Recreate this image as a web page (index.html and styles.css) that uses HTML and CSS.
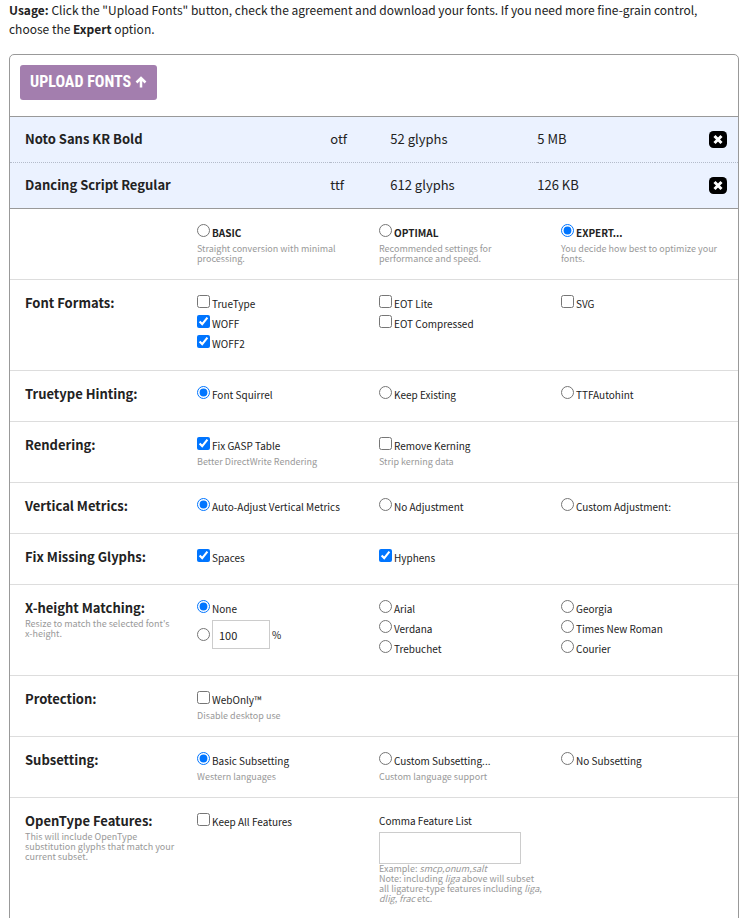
FILE: index.html
```
<!DOCTYPE html>
<html lang="en">
<head>
<meta charset="UTF-8" />
<meta name="viewport" content="width=device-width, initial-scale=1" />
<title>Webfont Generator</title>
<link rel="stylesheet" href="styles.css">
</head>
<body>

<p class="usage"><strong>Usage:</strong> Click the "Upload Fonts" button, check the agreement and download your fonts. If you need more fine-grain control, choose the <strong>Expert</strong> option.</p>

<form class="generator">
  <div class="upload">
    <button type="button" class="upload-btn">UPLOAD FONTS
      <svg class="arrow" width="12" height="12" viewBox="0 0 12 12"><path d="M6 11.5V2M1.5 6.5L6 2l4.5 4.5" fill="none" stroke="#fff" stroke-width="2.5"/></svg>
    </button>
  </div>

  <table class="files">
    <tr>
      <th scope="row" class="name">Noto Sans KR Bold</th>
      <td class="type">otf</td>
      <td class="glyphs">52 glyphs</td>
      <td>5 MB</td>
      <td class="remove"><button type="button" class="remove-btn" aria-label="Remove Noto Sans KR Bold"><svg width="18" height="17" viewBox="0 0 18 17"><rect width="18" height="17" rx="4.5"/><path d="M5.5 5l7 7M12.5 5l-7 7" stroke="#fff" stroke-width="3"/></svg></button></td>
    </tr>
    <tr>
      <th scope="row" class="name">Dancing Script Regular</th>
      <td class="type">ttf</td>
      <td class="glyphs">612 glyphs</td>
      <td>126 KB</td>
      <td class="remove"><button type="button" class="remove-btn" aria-label="Remove Dancing Script Regular"><svg width="18" height="17" viewBox="0 0 18 17"><rect width="18" height="17" rx="4.5"/><path d="M5.5 5l7 7M12.5 5l-7 7" stroke="#fff" stroke-width="3"/></svg></button></td>
    </tr>
  </table>

  <div class="row">
    <div class="title"></div>
    <div class="col">
      <label class="option mode"><input type="radio" name="mode">BASIC</label>
      <p class="hint">Straight conversion with minimal processing.</p>
    </div>
    <div class="col">
      <label class="option mode"><input type="radio" name="mode">OPTIMAL</label>
      <p class="hint">Recommended settings for performance and speed.</p>
    </div>
    <div class="col">
      <label class="option mode"><input type="radio" name="mode" checked>EXPERT...</label>
      <p class="hint">You decide how best to optimize your fonts.</p>
    </div>
  </div>

  <div class="row">
    <div class="title"><h4>Font Formats:</h4></div>
    <div class="col">
      <label class="option"><input type="checkbox">TrueType</label>
      <label class="option"><input type="checkbox" checked>WOFF</label>
      <label class="option"><input type="checkbox" checked>WOFF2</label>
    </div>
    <div class="col">
      <label class="option"><input type="checkbox">EOT Lite</label>
      <label class="option"><input type="checkbox">EOT Compressed</label>
    </div>
    <div class="col">
      <label class="option"><input type="checkbox">SVG</label>
    </div>
  </div>

  <div class="row">
    <div class="title"><h4>Truetype Hinting:</h4></div>
    <div class="col"><label class="option"><input type="radio" name="hinting" checked>Font Squirrel</label></div>
    <div class="col"><label class="option"><input type="radio" name="hinting">Keep Existing</label></div>
    <div class="col"><label class="option"><input type="radio" name="hinting">TTFAutohint</label></div>
  </div>

  <div class="row">
    <div class="title"><h4>Rendering:</h4></div>
    <div class="col">
      <label class="option"><input type="checkbox" checked>Fix GASP Table</label>
      <p class="hint">Better DirectWrite Rendering</p>
    </div>
    <div class="col">
      <label class="option"><input type="checkbox">Remove Kerning</label>
      <p class="hint">Strip kerning data</p>
    </div>
  </div>

  <div class="row">
    <div class="title"><h4>Vertical Metrics:</h4></div>
    <div class="col"><label class="option"><input type="radio" name="metrics" checked>Auto-Adjust Vertical Metrics</label></div>
    <div class="col"><label class="option"><input type="radio" name="metrics">No Adjustment</label></div>
    <div class="col"><label class="option"><input type="radio" name="metrics">Custom Adjustment:</label></div>
  </div>

  <div class="row">
    <div class="title"><h4>Fix Missing Glyphs:</h4></div>
    <div class="col"><label class="option"><input type="checkbox" checked>Spaces</label></div>
    <div class="col"><label class="option"><input type="checkbox" checked>Hyphens</label></div>
  </div>

  <div class="row">
    <div class="title">
      <h4>X-height Matching:</h4>
      <p class="hint">Resize to match the selected font's <span class="nowrap">x-height.</span></p>
    </div>
    <div class="col">
      <label class="option"><input type="radio" name="xheight" checked>None</label>
      <div class="option percent">
        <input type="radio" name="xheight" aria-label="Custom percentage">
        <input type="text" class="text" id="percent" value="100">
        <label for="percent">%</label>
      </div>
    </div>
    <div class="col">
      <label class="option"><input type="radio" name="xheight">Arial</label>
      <label class="option"><input type="radio" name="xheight">Verdana</label>
      <label class="option"><input type="radio" name="xheight">Trebuchet</label>
    </div>
    <div class="col">
      <label class="option"><input type="radio" name="xheight">Georgia</label>
      <label class="option"><input type="radio" name="xheight">Times New Roman</label>
      <label class="option"><input type="radio" name="xheight">Courier</label>
    </div>
  </div>

  <div class="row">
    <div class="title"><h4>Protection:</h4></div>
    <div class="col">
      <label class="option"><input type="checkbox">WebOnly™</label>
      <p class="hint">Disable desktop use</p>
    </div>
  </div>

  <div class="row">
    <div class="title"><h4>Subsetting:</h4></div>
    <div class="col">
      <label class="option"><input type="radio" name="subset" checked>Basic Subsetting</label>
      <p class="hint">Western languages</p>
    </div>
    <div class="col">
      <label class="option"><input type="radio" name="subset">Custom Subsetting...</label>
      <p class="hint">Custom language support</p>
    </div>
    <div class="col"><label class="option"><input type="radio" name="subset">No Subsetting</label></div>
  </div>

  <div class="row">
    <div class="title">
      <h4>OpenType Features:</h4>
      <p class="hint">This will include OpenType substitution glyphs that match your current subset.</p>
    </div>
    <div class="col"><label class="option"><input type="checkbox">Keep All Features</label></div>
    <div class="col">
      <label class="field" for="features">Comma Feature List</label>
      <input type="text" class="text features" id="features">
      <p class="hint">Example: <em>smcp,onum,salt</em><br>Note: including <em>liga</em> above will subset<br>all ligature-type features including <em>liga</em>, <em>dlig</em>, <em>frac</em> etc.</p>
    </div>
  </div>
</form>

</body>
</html>
```
FILE: styles.css
```
* { box-sizing: border-box; }
body { margin: 0 9px; font-family: "Noto Sans CJK SC", "Noto Sans", sans-serif; font-size: 13px; line-height: 19px; color: #222; background: #fff; }
p, h4 { margin: 0; }
button, input { font-family: inherit; }

.usage { margin-bottom: 16px; font-size: 12px; }

.generator { padding-bottom: 15px; border: 1px solid #999; border-radius: 5px; }
.upload { padding: 10px 10px 16px; }
.upload-btn { display: flex; align-items: center; gap: 4px; height: 35px; padding: 0 10px 2px; border: 0; border-radius: 3px; background: #a37eae; color: #fff; font-family: "Roboto Condensed", "Open Sans Condensed", "Liberation Sans", sans-serif; font-size: 16px; font-weight: bold; white-space: nowrap; cursor: pointer; }
.arrow { flex: none; }

/* uploaded files */
.files { width: 100%; border-collapse: collapse; background: #ebf2ff; border-top: 1px solid #999; border-bottom: 1px solid #999; }
.files th, .files td { height: 46px; padding: 0 0 3px; text-align: left; }
.files tr + tr th, .files tr + tr td { border-top: 1px dotted #b4bccb; }
.files .name { width: 44%; padding-left: 15px; }
.files .type { width: 60px; }
.files .glyphs { width: 147px; }
.files .remove { padding-right: 11px; text-align: right; }
.remove-btn { padding: 0; border: 0; background: none; cursor: pointer; vertical-align: middle; }
.remove-btn svg { display: block; }

/* settings */
.row { display: grid; grid-template-columns: repeat(4, 1fr); padding: 15px 0; border-bottom: 1px solid #ddd; }
.row:last-child { border-bottom: 0; }
.title { padding: 0 10px 0 15px; }
.title h4 { margin-bottom: 3px; font-size: 13px; line-height: 16px; }
.col { padding: 0 10px 0 5px; }
.option { display: flex; gap: 2px; min-height: 20px; font-size: 10px; line-height: 18px; }
.option input[type="radio"], .option input[type="checkbox"] { flex: none; width: 13px; height: 13px; margin: 0; }
.mode { font-weight: bold; }
.hint { font-size: 9px; line-height: 10px; color: #999; }
.nowrap { white-space: nowrap; }
.text { padding: 0 6px; border: 1px solid #ccc; font-size: 11px; color: #222; }
.percent { align-items: center; }
.percent .text { width: 58px; height: 29px; }
.features { display: block; width: 142px; height: 32px; }
.field { display: block; padding-bottom: 3px; font-size: 10px; line-height: 16px; }
```
